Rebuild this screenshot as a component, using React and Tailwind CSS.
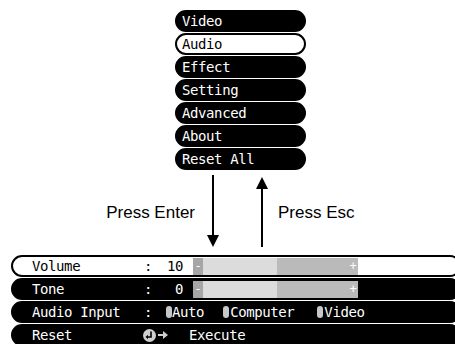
import React from "react";

const mono = "font-['DejaVu_Sans_Mono',monospace] text-[14px] tracking-[-0.4px]";

const menu = ["Video", "Audio", "Effect", "Setting", "Advanced", "About", "Reset All"];

const Pill = () => <span className="inline-block w-[6px] h-[12px] rounded-full bg-[#c8c8c8]" />;

const Bar = () => (
  <div className="ml-[10px] flex h-[17px] text-white text-[12px] leading-[17px] tracking-normal">
    <div className="w-[10px] bg-[#a6a6a6] text-center">-</div>
    <div className="w-[74px] bg-[#dcdcdc]" />
    <div className="w-[81px] bg-[#bababa] flex justify-end">
      <span className="w-[10px] text-center">+</span>
    </div>
  </div>
);

const App = () => {
  return (
    <div className="w-[455px] h-[344px] overflow-hidden bg-white">
      {/* menu */}
      <div className={`pt-[10px] pl-[175px] flex flex-col gap-px ${mono}`}>
        {menu.map((m) => (
          <div
            key={m}
            className={`w-[131px] h-[22px] rounded-full border-2 pl-[5px] flex items-center ${
              m === "Audio" ? "bg-white border-black text-black" : "bg-black border-black text-white"
            }`}
          >
            {m}
          </div>
        ))}
      </div>

      {/* arrows */}
      <div className="h-[85px] flex items-center font-['Liberation_Sans',Arial,sans-serif] text-[17px] text-black">
        <div className="w-[195px] text-right">Press Enter</div>
        <svg className="ml-[12px]" width="12" height="85" viewBox="0 0 12 85">
          <line x1="6" y1="5" x2="6" y2="66" stroke="black" strokeWidth="2" />
          <polygon points="0,65 12,65 6,77" fill="black" />
        </svg>
        <svg className="ml-[37px]" width="12" height="85" viewBox="0 0 12 85">
          <polygon points="6,7 0,19 12,19" fill="black" />
          <line x1="6" y1="18" x2="6" y2="77" stroke="black" strokeWidth="2" />
        </svg>
        <div className="ml-[10px]">Press Esc</div>
      </div>

      {/* settings */}
      <div className={`pl-[11px] flex flex-col gap-px ${mono}`}>
        <div className="w-[450px] h-[22px] rounded-full border-2 border-black bg-white text-black pl-[19px] flex items-center">
          <span className="w-[112px]">Volume</span>
          <span className="w-[8px] text-center">:</span>
          <span className="w-[31px] text-right">10</span>
          <Bar />
        </div>
        <div className="w-[450px] h-[22px] rounded-full border-2 border-black bg-black text-white pl-[19px] flex items-center">
          <span className="w-[112px]">Tone</span>
          <span className="w-[8px] text-center">:</span>
          <span className="w-[31px] text-right">0</span>
          <Bar />
        </div>
        <div className="w-[450px] h-[22px] rounded-full border-2 border-black bg-black text-white pl-[19px] flex items-center">
          <span className="w-[112px]">Audio Input</span>
          <span className="w-[8px] text-center">:</span>
          <span className="ml-[14px] flex items-center">
            <Pill />
            <span>Auto</span>
          </span>
          <span className="ml-[19px] flex items-center">
            <Pill />
            <span className="ml-[1px]">Computer</span>
          </span>
          <span className="ml-[23px] flex items-center">
            <Pill />
            <span className="ml-[1px]">Video</span>
          </span>
        </div>
        <div className="w-[450px] h-[22px] rounded-full border-2 border-black bg-black text-white pl-[19px] flex items-center">
          <span className="w-[111px]">Reset</span>
          <svg width="13" height="13" viewBox="0 0 13 13">
            <circle cx="6.5" cy="6.5" r="6.5" fill="#cfcfcf" />
            <path d="M8 2.5 V8 H4" fill="none" stroke="black" strokeWidth="1.6" />
            <polygon points="2.5,8 5,5.8 5,10.2" fill="black" />
          </svg>
          <svg className="ml-[2px]" width="11" height="10" viewBox="0 0 11 10">
            <line x1="0" y1="5" x2="6" y2="5" stroke="#cfcfcf" strokeWidth="2" />
            <polygon points="5,1 10,5 5,9" fill="#cfcfcf" />
          </svg>
          <span className="ml-[20px]">Execute</span>
        </div>
      </div>
    </div>
  );
};

export default App;
